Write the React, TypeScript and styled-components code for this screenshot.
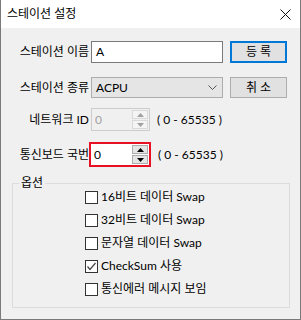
import React from "react";
import styled, { createGlobalStyle } from "styled-components";

const GlobalStyle = createGlobalStyle`
  html, body {
    margin: 0;
    padding: 0;
    background: #ffffff;
  }
  body {
    font-family: Lato, "Noto Sans CJK KR", "Noto Sans", sans-serif;
    font-size: 12px;
    color: #000;
  }
`;

const options = [
  { label: "16비트 데이터 Swap", checked: false },
  { label: "32비트 데이터 Swap", checked: false },
  { label: "문자열 데이터 Swap", checked: false },
  { label: "CheckSum 사용", checked: true },
  { label: "통신에러 메시지 보임", checked: false }
];

function SpinBox(props: { value: string; disabled?: boolean; highlight?: boolean }) {
  return (
    <Spin $disabled={props.disabled} $highlight={props.highlight}>
      <SpinValue $disabled={props.disabled}>{props.value}</SpinValue>
      <SpinButtons>
        <SpinButton $disabled={props.disabled}>
          <svg width="7" height="4" viewBox="0 0 7 4">
            <path d="M0 4 L3.5 0 L7 4 Z" fill="currentColor" />
          </svg>
        </SpinButton>
        <SpinButton $disabled={props.disabled}>
          <svg width="7" height="4" viewBox="0 0 7 4">
            <path d="M0 0 L3.5 4 L7 0 Z" fill="currentColor" />
          </svg>
        </SpinButton>
      </SpinButtons>
    </Spin>
  );
}

export default function App() {
  return (
    <>
      <GlobalStyle />
      <Window>
        <TitleBar>
          <Title>스테이션 설정</Title>
          <svg width="11" height="11" viewBox="0 0 11 11">
            <path d="M0.5 0.5 L10.5 10.5 M10.5 0.5 L0.5 10.5" stroke="#111" strokeWidth="1" />
          </svg>
        </TitleBar>
        <Body>
          <Row $top={13}>
            <Label>스테이션 이름</Label>
            <TextInput>A</TextInput>
            <Button $primary>등 록</Button>
          </Row>
          <Row $top={14}>
            <Label>스테이션 종류</Label>
            <Select>
              <span>ACPU</span>
              <svg width="9" height="5" viewBox="0 0 9 5">
                <path d="M0.5 0.5 L4.5 4.5 L8.5 0.5" stroke="#555" strokeWidth="1" fill="none" />
              </svg>
            </Select>
            <Button>취 소</Button>
          </Row>
          <Row $top={10}>
            <Label>네트워크 ID</Label>
            <SpinBox value="0" disabled />
            <Range>( 0 - 65535 )</Range>
          </Row>
          <Row $top={11}>
            <Label>통신보드 국번</Label>
            <SpinBox value="0" highlight />
            <Range>( 0 - 65535 )</Range>
          </Row>
          <Group>
            <Legend>옵션</Legend>
            <CheckList>
              {options.map((o) => (
                <CheckRow key={o.label}>
                  <CheckBox>
                    {o.checked && (
                      <svg width="11" height="11" viewBox="0 0 11 11">
                        <path d="M1.5 5.5 L4 8.5 L9.5 2" stroke="#444" strokeWidth="1.2" fill="none" />
                      </svg>
                    )}
                  </CheckBox>
                  {o.label}
                </CheckRow>
              ))}
            </CheckList>
          </Group>
        </Body>
      </Window>
    </>
  );
}

const Window = styled.div`
  width: 301px;
  height: 320px;
  box-sizing: border-box;
  border: 1px solid #7a7a7a;
  border-top: none;
  background: #f0f0f0;
  display: flex;
  flex-direction: column;
`;

const TitleBar = styled.div`
  height: 28px;
  background: #ffffff;
  display: flex;
  align-items: center;
  justify-content: space-between;
  padding: 0 9px 0 6px;
`;

const Title = styled.span`
  font-size: 12px;
  line-height: 16px;
  margin-top: -1px;
`;

const Body = styled.div`
  display: flex;
  flex-direction: column;
`;

const Row = styled.div<{ $top: number }>`
  display: flex;
  align-items: center;
  margin-top: ${(p) => p.$top}px;
`;

const Label = styled.div`
  width: 88px;
  text-align: right;
  line-height: 16px;
  white-space: nowrap;
`;

const TextInput = styled.div`
  box-sizing: border-box;
  width: 132px;
  height: 22px;
  margin-left: 2px;
  border: 1px solid #7a7a7a;
  background: #ffffff;
  padding-left: 4px;
  line-height: 20px;
`;

const Select = styled.div`
  box-sizing: border-box;
  width: 132px;
  height: 21px;
  margin-left: 2px;
  border: 1px solid #adadad;
  background: #e5e5e5;
  padding: 0 5px 0 4px;
  display: flex;
  align-items: center;
  justify-content: space-between;
  line-height: 19px;
`;

const Button = styled.div<{ $primary?: boolean }>`
  box-sizing: border-box;
  width: 57px;
  height: ${(p) => (p.$primary ? 22 : 21)}px;
  margin-left: 7px;
  border: ${(p) => (p.$primary ? "2px solid #0078d7" : "1px solid #adadad")};
  background: #e1e1e1;
  display: flex;
  align-items: center;
  justify-content: center;
  line-height: 16px;
`;

const Spin = styled.div<{ $disabled?: boolean; $highlight?: boolean }>`
  box-sizing: border-box;
  width: ${(p) => (p.$highlight ? 62 : 59)}px;
  height: ${(p) => (p.$highlight ? 25 : 23)}px;
  margin-left: ${(p) => (p.$highlight ? 0 : 2)}px;
  border: ${(p) =>
    p.$highlight ? "2px solid #e81123" : p.$disabled ? "1px solid #cccccc" : "1px solid #7a7a7a"};
  background: ${(p) => (p.$disabled ? "#f0f0f0" : "#ffffff")};
  display: flex;
  align-items: center;
  justify-content: space-between;
  padding: 0 1px 0 3px;
`;

const SpinValue = styled.span<{ $disabled?: boolean }>`
  color: ${(p) => (p.$disabled ? "#a0a0a0" : "#000")};
  line-height: 16px;
`;

const SpinButtons = styled.div`
  display: flex;
  flex-direction: column;
  gap: 1px;
`;

const SpinButton = styled.div<{ $disabled?: boolean }>`
  box-sizing: border-box;
  width: 16px;
  height: 9px;
  border: 1px solid ${(p) => (p.$disabled ? "#d9d9d9" : "#adadad")};
  background: ${(p) => (p.$disabled ? "#f4f4f4" : "#e5e5e5")};
  color: ${(p) => (p.$disabled ? "#a0a0a0" : "#000")};
  display: flex;
  align-items: center;
  justify-content: center;
`;

const Range = styled.span`
  margin-left: 7px;
  line-height: 16px;
  white-space: pre;
`;

const Group = styled.fieldset`
  margin: 10px 10px 0 11px;
  padding: 0 0 10px 0;
  border: 1px solid #dcdcdc;
  min-width: 0;
`;

const Legend = styled.legend`
  margin-left: 6px;
  padding: 0 2px;
  line-height: 12px;
  font-size: 12px;
`;

const CheckList = styled.div`
  display: flex;
  flex-direction: column;
  gap: 7px;
  padding-left: 72px;
`;

const CheckRow = styled.div`
  display: flex;
  align-items: center;
  height: 16px;
  line-height: 16px;
  white-space: nowrap;
`;

const CheckBox = styled.div`
  box-sizing: border-box;
  width: 13px;
  height: 13px;
  border: 1px solid #333333;
  background: #ffffff;
  margin-right: 3px;
  display: flex;
  align-items: center;
  justify-content: center;
`;
